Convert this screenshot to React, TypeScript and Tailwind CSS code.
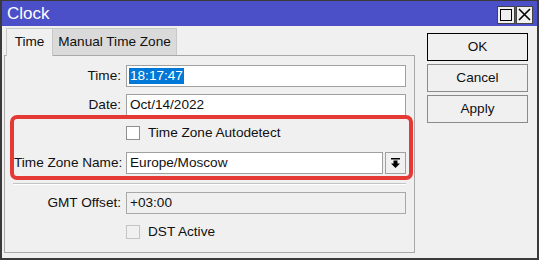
import React from 'react'

const font = { fontFamily: '"Liberation Sans", Arial, sans-serif' }

function Field({ label, children }: { label: string; children: React.ReactNode }) {
  return (
    <div className="flex items-center h-[22px]">
      <div className="w-[117px] text-right pr-[5px] shrink-0 whitespace-nowrap">{label}</div>
      <div className="flex-1 flex">{children}</div>
    </div>
  )
}

function Check({ label, disabled }: { label: string; disabled?: boolean }) {
  return (
    <div className="flex items-center h-[22px]">
      <div
        className={
          'w-[14px] h-[14px] border ' +
          (disabled ? 'border-[#c4c4c4] bg-[#f0f0f0]' : 'border-[#8f8f8f] bg-white')
        }
      />
      <span className="ml-[8px]">{label}</span>
    </div>
  )
}

export default function App() {
  return (
    <div
      className="w-[539px] h-[260px] bg-[#f0f0f0] border-x-2 border-t border-b-2 border-[#3a3a3a] flex flex-col text-[13.6px] text-[#111]"
      style={font}
    >
      {/* title bar */}
      <div className="h-[25px] shrink-0 bg-[#4b4fc8] flex items-center justify-between pl-[5px] pr-[4px]">
        <span className="text-white text-[17px]">Clock</span>
        <div className="flex gap-[1px] mt-[2px]">
          <div className="w-[18px] h-[18px] bg-[#f0f0f0] border border-[#444] flex items-center justify-center">
            <div className="w-[12px] h-[12px] border border-black" />
          </div>
          <div className="w-[17px] h-[18px] bg-[#f0f0f0] border border-[#444] flex items-center justify-center">
            <svg width="13" height="13" viewBox="0 0 13 13">
              <path d="M1 1L12 12M12 1L1 12" stroke="#000" strokeWidth="1.6" />
            </svg>
          </div>
        </div>
      </div>

      <div className="flex flex-1 pl-[2px]">
        {/* left: tabs + panel */}
        <div className="w-[411px] flex flex-col pt-[2px]">
          <div className="flex h-[27px] shrink-0 items-end pl-[2px]">
            <div className="h-[28px] w-[47px] bg-[#f0f0f0] border border-b-0 border-[#c8c8c8] flex items-center justify-center relative z-10 -mb-px pb-[1px]">
              Time
            </div>
            <div className="h-[27px] w-[124px] bg-[#dadada] border border-b-0 border-l-0 border-[#c8c8c8] flex items-center justify-center">
              Manual Time Zone
            </div>
          </div>
          <div className="flex-1 border border-[#a8a8a8] mb-[5px] pl-[4px] pr-[8px] pt-[9px] flex flex-col">
            <Field label="Time:">
              <div className="flex-1 h-[22px] bg-white border border-[#a0a0a0] flex items-center pl-[2px]">
                <span className="bg-[#0078d7] text-white px-[1px] leading-[16px]">18:17:47</span>
              </div>
            </Field>
            <div className="mt-[7px]">
              <Field label="Date:">
                <div className="flex-1 h-[22px] bg-white border border-[#a0a0a0] flex items-center pl-[3px]">
                  Oct/14/2022
                </div>
              </Field>
            </div>

            <div className="-mt-[1px] ml-[1px] -mr-[7px] border-4 border-[#e53935] rounded-[7px] pt-[3px] pb-[2px] pr-[3px] flex flex-col gap-[8px]">
              <div className="pl-[112px]">
                <Check label="Time Zone Autodetect" />
              </div>
              <div className="flex items-center h-[22px]">
                <div className="w-[112px] text-right pr-[5px] shrink-0 whitespace-nowrap">Time Zone Name:</div>
                <div className="flex-1 flex gap-[2px]">
                  <div className="flex-1 h-[22px] bg-white border border-[#a0a0a0] flex items-center pl-[3px]">
                    Europe/Moscow
                  </div>
                  <div className="w-[21px] h-[22px] border border-[#a0a0a0] bg-[#f0f0f0] flex items-center justify-center">
                    <svg width="11" height="11" viewBox="0 0 11 11">
                      <rect x="1" y="0" width="9" height="1.5" fill="#000" />
                      <path d="M3.5 2.5H7.5V5.5H10L5.5 10L1 5.5H3.5Z" fill="#000" />
                    </svg>
                  </div>
                </div>
              </div>
            </div>

            <div className="h-[2px] shrink-0 bg-[#c4c4c4] border-b border-white ml-[4px] mt-[3px]" />

            <div className="mt-[7px]">
              <Field label="GMT Offset:">
                <div className="flex-1 h-[22px] bg-[#f0f0f0] border border-[#a8a8a8] flex items-center pl-[3px]">
                  +03:00
                </div>
              </Field>
            </div>
            <div className="mt-[7px] pl-[117px]">
              <Check label="DST Active" disabled />
            </div>
          </div>
        </div>

        {/* right: buttons */}
        <div className="flex flex-col gap-[3px] ml-[12px] pt-[7px]">
          <button className="w-[101px] h-[28px] border border-black bg-[#f0f0f0]">OK</button>
          <button className="w-[101px] h-[28px] border border-[#8a8a8a] bg-[#f0f0f0]">Cancel</button>
          <button className="w-[101px] h-[28px] border border-[#8a8a8a] bg-[#f0f0f0]">Apply</button>
        </div>
      </div>
    </div>
  )
}
